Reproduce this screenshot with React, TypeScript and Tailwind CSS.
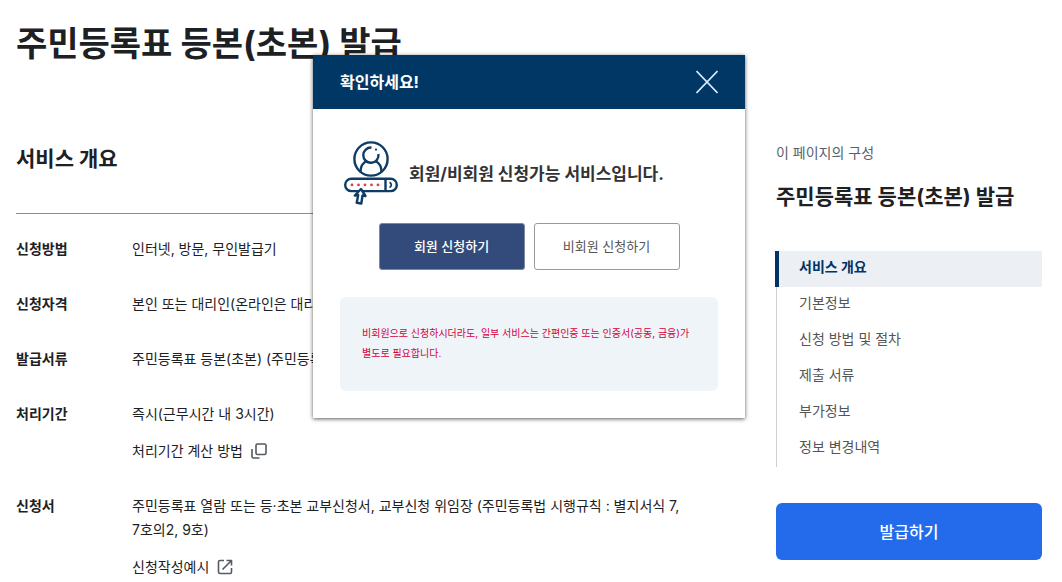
import { type ReactNode } from 'react';

const serviceRows: { label: string; lines: string; link?: { text: string; icon: ReactNode } }[] = [
  { label: '신청방법', lines: '인터넷, 방문, 무인발급기' },
  { label: '신청자격', lines: '본인 또는 대리인(온라인은 대리신청 불가)' },
  { label: '발급서류', lines: '주민등록표 등본(초본) (주민등록법)' },
  {
    label: '처리기간',
    lines: '즉시(근무시간 내 3시간)',
    link: { text: '처리기간 계산 방법', icon: <PopupIcon /> },
  },
  {
    label: '신청서',
    lines:
      '주민등록표 열람 또는 등·초본 교부신청서, 교부신청 위임장 (주민등록법 시행규칙 : 별지서식 7, 7호의2, 9호)',
    link: { text: '신청작성예시', icon: <ExternalIcon /> },
  },
];

const sections = ['서비스 개요', '기본정보', '신청 방법 및 절차', '제출 서류', '부가정보', '정보 변경내역'];

export default function App() {
  return (
    <div className="relative flex gap-[72px] break-keep bg-white pl-4 pr-5 font-['Inter','Noto_Sans_CJK_KR',sans-serif] text-[#1e2124]">
      <main className="min-w-0 flex-1">
        <h1 className="pt-5 text-[34px] font-bold leading-[48px]">주민등록표 등본(초본) 발급</h1>
        <h2 className="mt-[75px] border-b border-[#8a8d91] pb-[38px] text-[21px] font-bold leading-8">
          서비스 개요
        </h2>
        <dl className="flex flex-col gap-[31px] pt-[23px] text-[14px] leading-6">
          {serviceRows.map((row) => (
            <div key={row.label} className="flex">
              <dt className="w-[116px] shrink-0 font-bold">{row.label}</dt>
              <dd className="flex min-w-0 flex-col items-start gap-[13px]">
                <p>{row.lines}</p>
                {row.link && (
                  <a href="#" className="flex items-center gap-2">
                    {row.link.text}
                    {row.link.icon}
                  </a>
                )}
              </dd>
            </div>
          ))}
        </dl>
      </main>

      <aside className="w-[266px] shrink-0 pt-[141px]">
        <p className="text-[14px] leading-6 text-[#58616a]">이 페이지의 구성</p>
        <h2 className="mt-4 text-[21px] font-bold leading-8">주민등록표 등본(초본) 발급</h2>
        <nav className="mt-[38px] border-l border-[#cdd1d5] text-[14px] leading-8 text-[#555]">
          {sections.map((name, i) => (
            <a
              key={name}
              href="#"
              className={
                i === 0
                  ? '-ml-0.5 block border-l-4 border-[#003366] bg-[#eceff4] pb-1 pl-5 font-bold text-[#003366]'
                  : 'block pb-1 pl-[22px]'
              }
            >
              {name}
            </a>
          ))}
        </nav>
        <button className="mt-9 block h-[57px] w-full rounded-md bg-[#246beb] text-[16px] font-medium text-white">
          발급하기
        </button>
      </aside>

      <ApplyDialog />
    </div>
  );
}

function ApplyDialog() {
  return (
    <div
      role="dialog"
      aria-labelledby="apply-title"
      className="absolute left-[313px] top-[55px] w-[432px] bg-white shadow-[0_1px_4px_rgba(0,0,0,0.65)]"
    >
      <header className="flex h-[54px] items-center justify-between bg-[#003764] px-[27px] text-white">
        <h2 id="apply-title" className="text-[16px] font-bold leading-6">
          확인하세요!
        </h2>
        <button aria-label="닫기">
          <svg width="22" height="24" viewBox="0 0 22 24" stroke="#dcecff" strokeWidth="1.6" fill="none">
            <path d="M.5 1 21.5 23M21.5 1 .5 23" />
          </svg>
        </button>
      </header>
      <div className="px-[27px] pb-[27px] pt-[31px] text-[#333]">
        <div className="flex items-center gap-[10px] pl-[3px]">
          <MemberIcon />
          <strong className="pt-0.5 text-[17px] font-bold leading-6">회원/비회원 신청가능 서비스입니다.</strong>
        </div>
        <div className="mt-[18px] flex justify-center gap-[9px] text-[13px]">
          <button className="h-[47px] w-[146px] rounded-[3px] border border-[#7c87a0] bg-[#334b7a] font-medium text-white">
            회원 신청하기
          </button>
          <button className="h-[47px] w-[146px] rounded-[3px] border border-[#999] bg-white text-[#555]">
            비회원 신청하기
          </button>
        </div>
        <p className="mt-[27px] min-h-[94px] rounded-md bg-[#eff4f8] px-[22px] pt-[26px] text-[10px] leading-5 text-[#d3003f]">
          비회원으로 신청하시더라도, 일부 서비스는 간편인증 또는 인증서(공동, 금융)가 별도로 필요합니다.
        </p>
      </div>
    </div>
  );
}

function MemberIcon() {
  return (
    <svg width="56" height="65" viewBox="0 0 56 65" fill="none" stroke="#0d3d66" strokeWidth="2.4">
      <circle cx="28" cy="19" r="16.6" />
      <path d="M28.500 7.600A7.600 7.600 0 1 0 35.400 14" />
      <circle cx="33" cy="9.600" r="1.100" fill="#0d3d66" stroke="none" />
      <path d="M17.500 32.500c0-6.500 2.500-10 6.500-11.500M38.500 32.500c0-6.500-2.500-10-6.500-11.500" />
      <rect x="2.200" y="38.700" width="51.600" height="12.400" rx="6.200" />
      <path d="M42.500 38.500V51" />
      <path d="M46.500 41.500c3.500.5 3.500 6.200 0 6.700v-2l1.200-1.300-1.200-1.400z" fill="#0d3d66" stroke="none" />
      {[9, 15.5, 22, 28.5, 35].map((x) => (
        <circle key={x} cx={x} cy="44.900" r="1.400" fill="#d8434a" stroke="none" />
      ))}
      <path d="M18 49l4.500 7-3-.5-1.200 8-4.600-.8 1.500-7.700-3.400.5z" fill="#fff" strokeLinejoin="round" />
    </svg>
  );
}

function PopupIcon() {
  return (
    <svg width="16" height="16" viewBox="0 0 16 16" fill="none" stroke="#555b62" strokeWidth="1.6">
      <rect x="5" y="1" width="10" height="10.500" rx="1.500" />
      <path d="M1 6V13.500Q1 15 2.500 15H8.500" />
    </svg>
  );
}

function ExternalIcon() {
  return (
    <svg width="16" height="16" viewBox="0 0 16 16" fill="none" stroke="#555b62" strokeWidth="1.600">
      <path d="M7 1.500H3Q1.500 1.500 1.500 3V13Q1.500 14.500 3 14.500H13Q14.500 14.500 14.500 13V9" />
      <path d="M9.500 1.500H14.500V6.500M14.500 1.500 5.500 10.500" />
    </svg>
  );
}
